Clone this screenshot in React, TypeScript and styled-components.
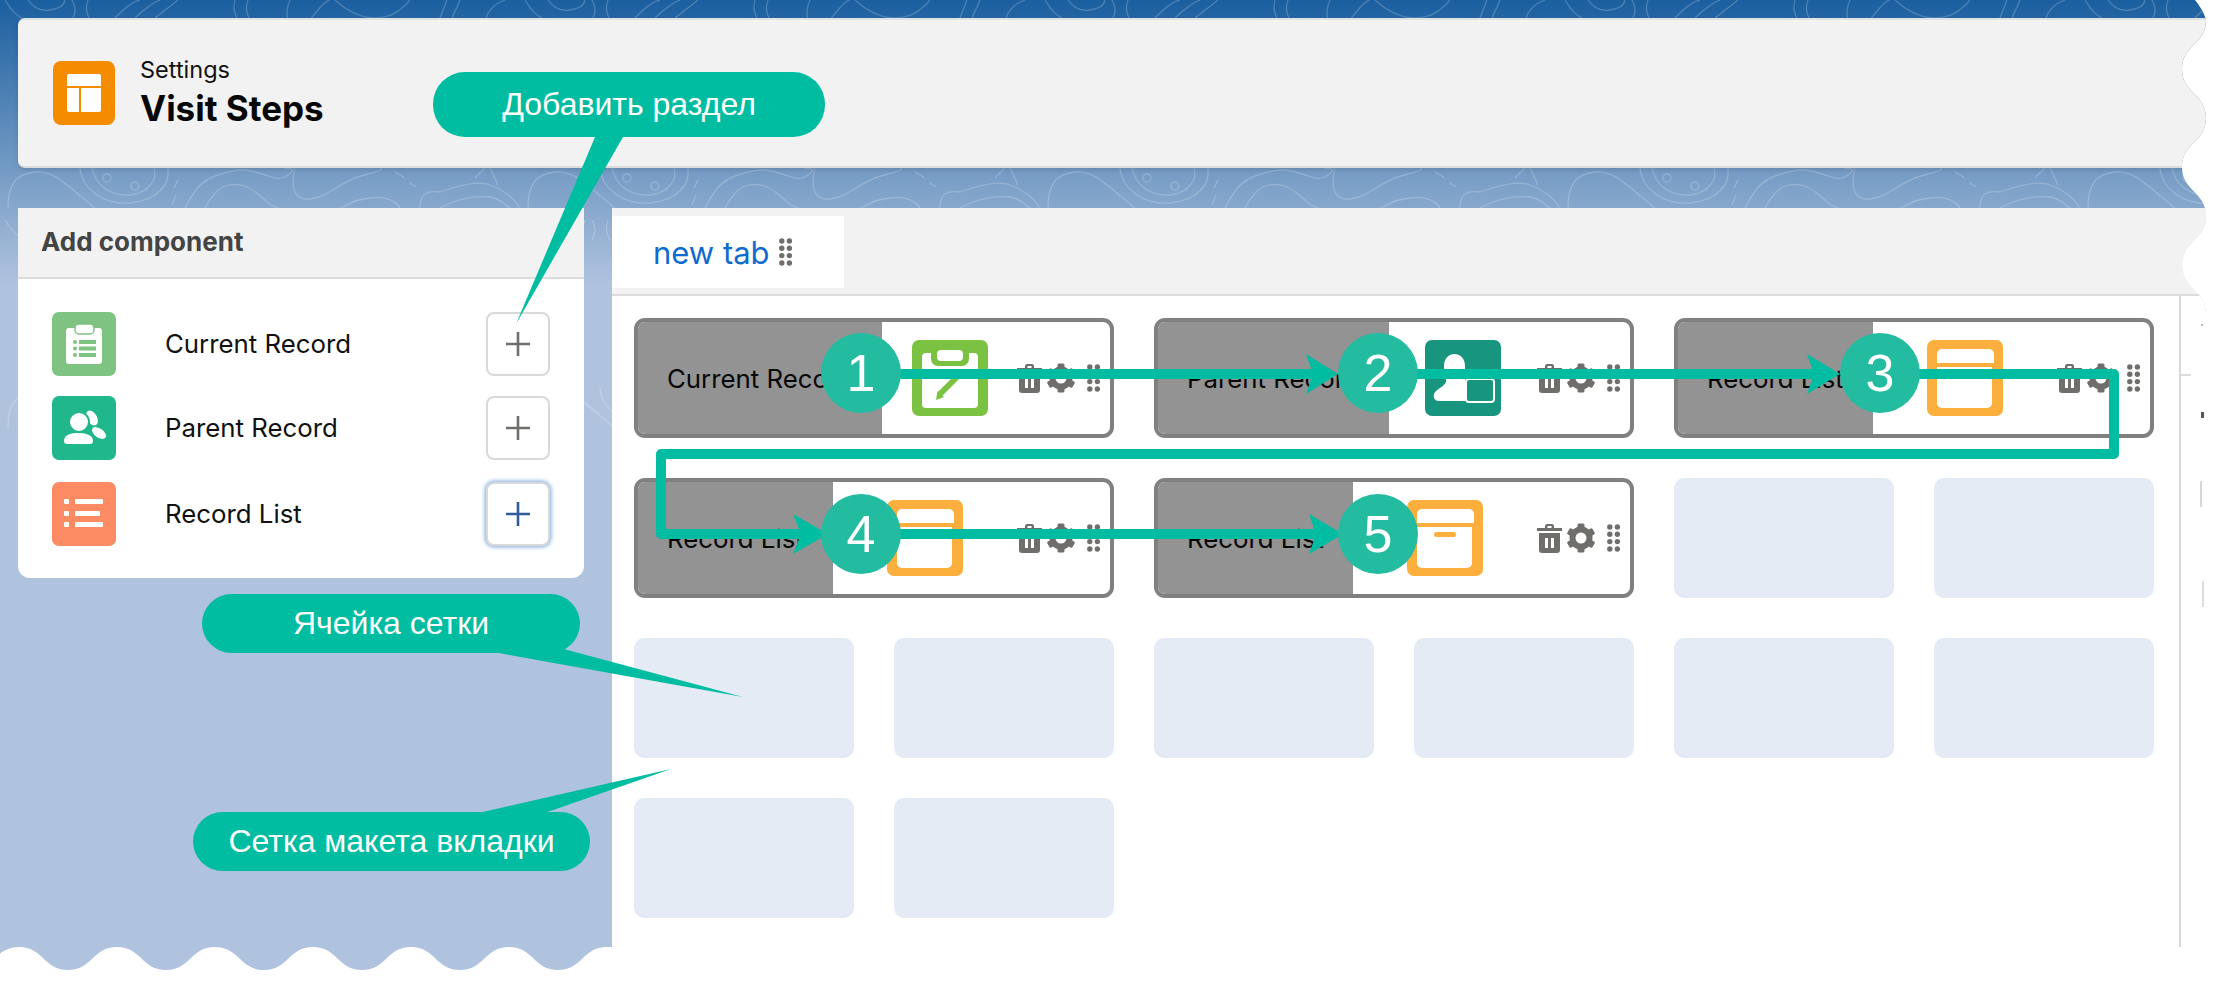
import React from "react";
import styled, { createGlobalStyle } from "styled-components";

const buildOutline = () => {
  let d = "M0 0 L2195 0 C2199 5 2204 12 2206 20 ";
  const rightY = [69, 118, 167, 216, 265, 314];
  let prev = 20;
  let inward = true;
  rightY.forEach((y) => {
    const x = inward ? 2182 : 2206;
    const px = inward ? 2206 : 2182;
    const mid = (y - prev) / 2;
    d += `C${px} ${prev + mid} ${x} ${y - mid} ${x} ${y} `;
    prev = y;
    inward = !inward;
  });
  d += "L2206 947 L607 947 ";
  let x = 607;
  let low = true;
  while (x > 0) {
    const nx = x - 49;
    const from = low ? 947 : 970;
    const to = low ? 970 : 947;
    d += `C${x - 24} ${from} ${nx + 24} ${to} ${nx} ${to} `;
    x = nx;
    low = !low;
  }
  d += "L0 955 Z";
  return d;
};

const GlobalStyle = createGlobalStyle`
  html, body { margin: 0; padding: 0; background: #fff; }
  * { box-sizing: border-box; }
`;

const Page = styled.div`
  position: relative;
  width: 2216px;
  height: 982px;
  overflow: hidden;
  padding: 18px 0 0 18px;
  font-family: Inter, "Liberation Sans", sans-serif;
  background: linear-gradient(#1b5f9f 0, #b0c3de 285px, #b0c3de 100%);
  clip-path: path("${buildOutline()}");
`;

const Topo = styled.svg`
  position: absolute;
  left: 0;
  top: 0;
  width: 2216px;
  height: 440px;
`;

const Header = styled.header`
  position: relative;
  display: flex;
  align-items: center;
  gap: 26px;
  height: 150px;
  padding: 0 0 0 35px;
  background: #f2f2f2;
  border-top: 2px solid #e2e2e2;
  border-bottom: 2px solid #dcdcdc;
  border-radius: 7px 0 0 7px;
  box-shadow: 0 2px 4px rgba(0, 0, 0, 0.12);
`;

const HeadIcon = styled.svg`
  width: 62px;
  height: 64px;
  flex: none;
`;

const Titles = styled.div`
  display: flex;
  flex-direction: column;
  gap: 3px;
  margin: -3px 0 0 -1px;
`;

const Eyebrow = styled.div`
  font-size: 23.5px;
  line-height: 30px;
  color: #111;
`;

const Title = styled.h1`
  margin: 0;
  font-size: 35px;
  line-height: 40px;
  font-weight: 700;
  color: #080707;
`;

const Main = styled.div`
  position: relative;
  display: flex;
  gap: 28px;
  margin-top: 40px;
`;

const Sidebar = styled.aside`
  flex: none;
  width: 566px;
  height: 370px;
  background: #fff;
  border-radius: 0 0 12px 12px;
`;

const SideHead = styled.div`
  display: flex;
  align-items: center;
  height: 71px;
  padding: 0 0 3px 23px;
  background: #f2f2f2;
  border-bottom: 2px solid #dcdcdc;
  font-size: 26px;
  font-weight: 700;
  color: #444;
`;

const SideRow = styled.div<{ $top: number }>`
  display: flex;
  align-items: center;
  height: 64px;
  margin-top: ${(p) => p.$top}px;
  padding: 0 34px;
`;

const Tile = styled.svg`
  width: 64px;
  height: 64px;
  flex: none;
`;

const RowLabel = styled.span`
  flex: 1;
  padding: 0 0 2px 49px;
  font-size: 25.8px;
  color: #111;
`;

const AddButton = styled.button<{ $focus?: boolean }>`
  display: flex;
  align-items: center;
  justify-content: center;
  width: 64px;
  height: 64px;
  padding: 0;
  background: #fff;
  border: 2px solid #d9d9d9;
  border-radius: 8px;
  color: ${(p) => (p.$focus ? "#2f5c99" : "#6f6e6b")};
  box-shadow: ${(p) => (p.$focus ? "0 0 4px 1px #77a6e0" : "none")};
`;

const Workspace = styled.section`
  flex: 1;
  height: 739px;
  display: flex;
  flex-direction: column;
  background: #fff;
`;

const TabStrip = styled.div`
  flex: none;
  height: 88px;
  padding-top: 8px;
  background: #f2f2f2;
  border-bottom: 2px solid #dcdcdc;
`;

const Tab = styled.div`
  display: flex;
  align-items: center;
  gap: 9px;
  width: 232px;
  height: 72px;
  padding-left: 41px;
  background: #fff;
  font-size: 31px;
  color: #0f6bd0;
`;

const TabGrip = styled.span`
  display: flex;
  color: #706e6b;
`;

const Board = styled.div`
  flex: 1;
  display: flex;
`;

const Canvas = styled.div`
  flex: none;
  width: 1569px;
  padding: 22px 0 0 22px;
  border-right: 2px solid #d8d8d8;
`;

const Grid = styled.div`
  display: grid;
  grid-template-columns: repeat(6, 220px);
  grid-auto-rows: 120px;
  gap: 40px;
`;

const Cell = styled.div`
  background: #e4ebf5;
  border-radius: 10px;
`;

const Card = styled.div`
  grid-column: span 2;
  display: flex;
  align-items: center;
  overflow: hidden;
  background: #fff;
  border: 4px solid #808080;
  border-radius: 11px;
`;

const CardLabel = styled.div`
  display: flex;
  align-items: center;
  height: 100%;
  padding: 0 29px;
  background: #939393;
  font-size: 25.8px;
  white-space: nowrap;
  color: #080707;
`;

const CardIconSlot = styled.div`
  flex: 1;
  display: flex;
  justify-content: center;
`;

const CardIcon = styled.svg`
  width: 76px;
  height: 76px;
`;

const Actions = styled.div`
  display: flex;
  align-items: center;
  gap: 5px;
  margin-right: 10px;
  color: #706e6b;
`;

const ActionGrip = styled.span`
  display: flex;
  margin-left: 7px;
`;

const Rail = styled.div`
  flex: 1;
  display: flex;
  flex-direction: column;
  align-items: flex-start;
`;

const RailMark = styled.div<{ $top: number; $left: number; $w: number; $h: number; $c: string }>`
  flex: none;
  margin-top: ${(p) => p.$top}px;
  margin-left: ${(p) => p.$left}px;
  width: ${(p) => p.$w}px;
  height: ${(p) => p.$h}px;
  background: ${(p) => p.$c};
`;

const Overlay = styled.svg`
  position: absolute;
  left: 0;
  top: 0;
  width: 2216px;
  height: 982px;
  pointer-events: none;
`;

const Badge = styled.div<{ $x: number; $y: number }>`
  position: absolute;
  left: ${(p) => p.$x - 40}px;
  top: ${(p) => p.$y - 40}px;
  display: flex;
  align-items: center;
  justify-content: center;
  width: 80px;
  height: 80px;
  border-radius: 50%;
  background: #23bca0;
  color: #fff;
  font-family: "Liberation Sans", Arial, sans-serif;
  font-size: 52px;
  line-height: 1;
`;

const Pill = styled.div<{ $x: number; $y: number; $w: number; $h: number }>`
  position: absolute;
  left: ${(p) => p.$x}px;
  top: ${(p) => p.$y}px;
  width: ${(p) => p.$w}px;
  height: ${(p) => p.$h}px;
  display: flex;
  align-items: center;
  justify-content: center;
  border-radius: 32px;
  background: #00bda2;
  color: #fff;
  font-family: "Liberation Sans", Arial, sans-serif;
  font-size: 32px;
  white-space: nowrap;
`;

const Grip = () => (
  <svg width="13" height="28" viewBox="0 0 13 28" fill="currentColor">
    {[3, 10.3, 17.6, 25].map((y) => (
      <React.Fragment key={y}>
        <circle cx="2.8" cy={y} r="2.7" />
        <circle cx="10.4" cy={y} r="2.7" />
      </React.Fragment>
    ))}
  </svg>
);

const Trash = () => (
  <svg width="25" height="30" viewBox="0 0 25 30" fill="currentColor">
    <path d="M8 5V3a2 2 0 0 1 2-2h5a2 2 0 0 1 2 2v2h8v3H0V5zM10.5 3v2h4V3z" />
    <path fillRule="evenodd" d="M2 10h21v17a3 3 0 0 1-3 3H5a3 3 0 0 1-3-3zM8 15v10h3V15zM14 15v10h3V15z" />
  </svg>
);

const Gear = () => (
  <svg width="28" height="30" viewBox="0 0 28 30" fill="currentColor">
    <circle cx="14" cy="15" r="8.5" fill="none" stroke="currentColor" strokeWidth="6" />
    {[0, 60, 120, 180, 240, 300].map((a) => (
      <rect key={a} x="10.5" y="0.5" width="7" height="7" rx="1.5" transform={`rotate(${a} 14 15)`} />
    ))}
  </svg>
);

const Plus = () => (
  <svg width="26" height="26" viewBox="0 0 26 26" stroke="currentColor" strokeWidth="2.6" fill="none">
    <path d="M13 1V25M1 13H25" />
  </svg>
);

const ClipboardIcon = () => (
  <CardIcon viewBox="0 0 76 76">
    <rect width="76" height="76" rx="7" fill="#7cc242" />
    <rect x="10" y="13" width="56" height="55" rx="4" fill="#fff" />
    <rect x="19" y="7" width="38" height="19" rx="7" fill="#7cc242" />
    <rect x="25" y="10" width="26" height="11" rx="4" fill="#fff" />
    <path d="M28 54L48 34" stroke="#7cc242" strokeWidth="6" />
    <path d="M24 60L25.5 51 32 57Z" fill="#7cc242" />
  </CardIcon>
);

const ContactIcon = () => (
  <CardIcon viewBox="0 0 76 76">
    <rect width="76" height="76" rx="7" fill="#18957f" />
    <path fill="#fff" d="M19 26C19 19 23 14 29.500 14S40 19 40 26V61H14C10 61 8 58 9 54 11 49 19 47 21 42 22 38 19 33 19 26Z" />
    <rect x="41" y="39" width="28" height="23" rx="3" fill="#18957f" stroke="#fff" strokeWidth="2" />
  </CardIcon>
);

const ArchiveIcon = () => (
  <CardIcon viewBox="0 0 76 76">
    <rect width="76" height="76" rx="7" fill="#fcaf3c" />
    <path fill="#fff" d="M10 14a5 5 0 0 1 5-5H62a5 5 0 0 1 5 5V23H10Z" />
    <path fill="#fff" d="M10 27H65V63a5 5 0 0 1-5 5H15a5 5 0 0 1-5-5Z" />
    <rect x="27" y="32" width="22" height="5" rx="2.5" fill="#fcaf3c" />
  </CardIcon>
);

const ClipTile = () => (
  <Tile viewBox="0 0 64 64">
    <rect width="64" height="64" rx="7" fill="#7fc382" />
    <rect x="14" y="16" width="36" height="36" rx="3" fill="#fff" />
    <rect x="23" y="12" width="19" height="10" rx="4" fill="#fff" stroke="#7fc382" strokeWidth="1.500" />
    {[30, 36.5, 43].map((y) => (
      <React.Fragment key={y}>
        <circle cx="23" cy={y} r="2" fill="#7fc382" />
        <rect x="27" y={y - 2} width="17" height="4" fill="#7fc382" />
      </React.Fragment>
    ))}
  </Tile>
);

const PeopleTile = () => (
  <Tile viewBox="0 0 64 64">
    <rect width="64" height="64" rx="7" fill="#21b78c" />
    <ellipse cx="40" cy="22" rx="5" ry="8" transform="rotate(-30 40 22)" fill="#fff" />
    <ellipse cx="47" cy="37" rx="8" ry="4.500" transform="rotate(35 47 37)" fill="#fff" />
    <path d="M12 45C12 38 20 37 26 37S41 38 41 45C41 47 40 48 38 48H15C13 48 12 47 12 45Z" fill="#fff" />
    <circle cx="27" cy="26" r="10" fill="#fff" stroke="#21b78c" strokeWidth="2" />
  </Tile>
);

const ListTile = () => (
  <Tile viewBox="0 0 64 64">
    <rect width="64" height="64" rx="7" fill="#fc8a63" />
    <g fill="#fff">
      <rect x="12" y="17" width="5" height="5" rx="1" />
      <rect x="12" y="29" width="5" height="5" rx="1" />
      <rect x="12" y="40" width="5" height="5" rx="1" />
      <rect x="23" y="17" width="28" height="5" rx="1" />
      <rect x="23" y="29" width="25" height="5" rx="1" />
      <rect x="23" y="40" width="28" height="5" rx="1" />
    </g>
  </Tile>
);

const topoPaths = [
  "M5 0Q14 16 26 20", "M28 0Q36 12 50 10T65 0", "M72 0Q78 10 72 20", "M88 0Q84 10 90 20",
  "M115 18Q130 2 140 0", "M135 18Q150 4 160 0", "M155 18L178 0", "M235 0Q232 10 238 20",
  "M248 0Q244 10 250 20", "M290 0Q285 10 288 20", "M310 20Q325 0 330 0", "M335 0Q355 18 375 18T410 0",
  "M440 18L447 0", "M452 18L460 0", "M485 20Q490 5 505 0",
  "M8 208C8 185 15 174 35 172C55 170 70 188 95 208",
  "M80 168C82 190 105 205 130 203C158 200 170 185 168 168",
  "M92 168C95 185 110 196 130 195C148 193 158 180 154 168",
  "M185 208C195 190 200 175 240 170C265 170 270 182 285 177Q300 168 284 168",
  "M205 208C215 190 225 180 245 186C265 195 265 205 278 208",
  "M295 168C290 190 295 200 310 199C330 197 340 180 365 175C375 172 385 170 380 168",
  "M340 208C350 205 350 200 370 198C385 196 395 200 400 208",
  "M395 172L405 178", "M410 183L416 187", "M178 180L174 188", "M176 195L172 205",
  "M420 208C420 195 425 190 440 192C460 185 480 180 490 185C505 190 515 200 520 208",
  "M440 208C455 200 470 195 490 197C500 198 505 205 510 208",
  "M475 178L485 168", "M490 168L498 185", "M3 230C12 260 8 300 0 320", "M12 340L3 360",
];

const Arrow = ({ tip, y, back, notch }: { tip: number; y: number; back: number; notch: number }) => (
  <polygon points={`${tip},${y} ${back},${y - 20} ${notch},${y} ${back},${y + 20}`} fill="#00bda2" />
);

const cards = [
  { name: "Current Record", icon: <ClipboardIcon /> },
  { name: "Parent Record", icon: <ContactIcon /> },
  { name: "Record List", icon: <ArchiveIcon /> },
  { name: "Record List", icon: <ArchiveIcon /> },
  { name: "Record List", icon: <ArchiveIcon /> },
];

export default function App() {
  return (
    <>
      <GlobalStyle />
      <Page>
        <Topo viewBox="0 0 2216 440">
          <defs>
            <pattern id="topo" width="520" height="220" patternUnits="userSpaceOnUse">
              <g fill="none" stroke="#fff" strokeOpacity="0.2" strokeWidth="1.300">
                {topoPaths.map((d) => (
                  <path key={d} d={d} />
                ))}
                <circle cx="107" cy="178" r="4" />
                <circle cx="135" cy="186" r="4" />
              </g>
            </pattern>
          </defs>
          <rect width="2216" height="440" fill="url(#topo)" />
        </Topo>

        <Header>
          <HeadIcon viewBox="0 0 62 64">
            <rect width="62" height="64" rx="8" fill="#f58c00" />
            <g fill="#fff">
              <path d="M14 15a2 2 0 0 1 2-2H46a2 2 0 0 1 2 2V25H14Z" />
              <path d="M14 27H26V51H16a2 2 0 0 1-2-2Z" />
              <path d="M28 27H48V49a2 2 0 0 1-2 2H28Z" />
            </g>
          </HeadIcon>
          <Titles>
            <Eyebrow>Settings</Eyebrow>
            <Title>Visit Steps</Title>
          </Titles>
        </Header>

        <Main>
          <Sidebar>
            <SideHead>Add component</SideHead>
            <SideRow $top={33}>
              <ClipTile />
              <RowLabel>Current Record</RowLabel>
              <AddButton>
                <Plus />
              </AddButton>
            </SideRow>
            <SideRow $top={20}>
              <PeopleTile />
              <RowLabel>Parent Record</RowLabel>
              <AddButton>
                <Plus />
              </AddButton>
            </SideRow>
            <SideRow $top={22}>
              <ListTile />
              <RowLabel>Record List</RowLabel>
              <AddButton $focus>
                <Plus />
              </AddButton>
            </SideRow>
          </Sidebar>

          <Workspace>
            <TabStrip>
              <Tab>
                new tab
                <TabGrip>
                  <Grip />
                </TabGrip>
              </Tab>
            </TabStrip>
            <Board>
              <Canvas>
                <Grid>
                  {cards.map((c, i) => (
                    <Card key={i}>
                      <CardLabel>{c.name}</CardLabel>
                      <CardIconSlot>{c.icon}</CardIconSlot>
                      <Actions>
                        <Trash />
                        <Gear />
                        <ActionGrip>
                          <Grip />
                        </ActionGrip>
                      </Actions>
                    </Card>
                  ))}
                  {Array.from({ length: 10 }).map((_, i) => (
                    <Cell key={i} />
                  ))}
                </Grid>
              </Canvas>
              <Rail>
                <RailMark $top={28} $left={20} $w={2} $h={2} $c="#bbb" />
                <RailMark $top={48} $left={0} $w={10} $h={2} $c="#dcdcdc" />
                <RailMark $top={36} $left={20} $w={3} $h={6} $c="#555" />
                <RailMark $top={63} $left={19} $w={2} $h={26} $c="#d8d8d8" />
                <RailMark $top={74} $left={21} $w={2} $h={26} $c="#dcdcdc" />
              </Rail>
            </Board>
          </Workspace>
        </Main>

        <Overlay viewBox="0 0 2216 982">
          <g fill="none" stroke="#00bda2" strokeWidth="10" strokeLinejoin="round" strokeLinecap="round">
            <path d="M902 374H1315" />
            <path d="M1412 374H1815" />
            <path d="M1915 374H2114V454H661V534H800" />
            <path d="M897 534H1315" />
          </g>
          <Arrow tip={1338} y={374} back={1306} notch={1313} />
          <Arrow tip={1840} y={374} back={1807} notch={1814} />
          <Arrow tip={828} y={534} back={793} notch={801} />
          <Arrow tip={1343} y={534} back={1309} notch={1316} />
          <g fill="#00bda2">
            <polygon points="598,130 627,130 516,324" />
            <polygon points="482,650 560,648 743,697" />
            <polygon points="465,816 536,816 671,769" />
          </g>
        </Overlay>

        <Badge $x={861} $y={373}>1</Badge>
        <Badge $x={1378} $y={373}>2</Badge>
        <Badge $x={1880} $y={373}>3</Badge>
        <Badge $x={861} $y={534}>4</Badge>
        <Badge $x={1378} $y={534}>5</Badge>

        <Pill $x={433} $y={72} $w={392} $h={65}>Добавить раздел</Pill>
        <Pill $x={202} $y={594} $w={378} $h={59}>Ячейка сетки</Pill>
        <Pill $x={193} $y={812} $w={397} $h={59}>Сетка макета вкладки</Pill>
      </Page>
    </>
  );
}
